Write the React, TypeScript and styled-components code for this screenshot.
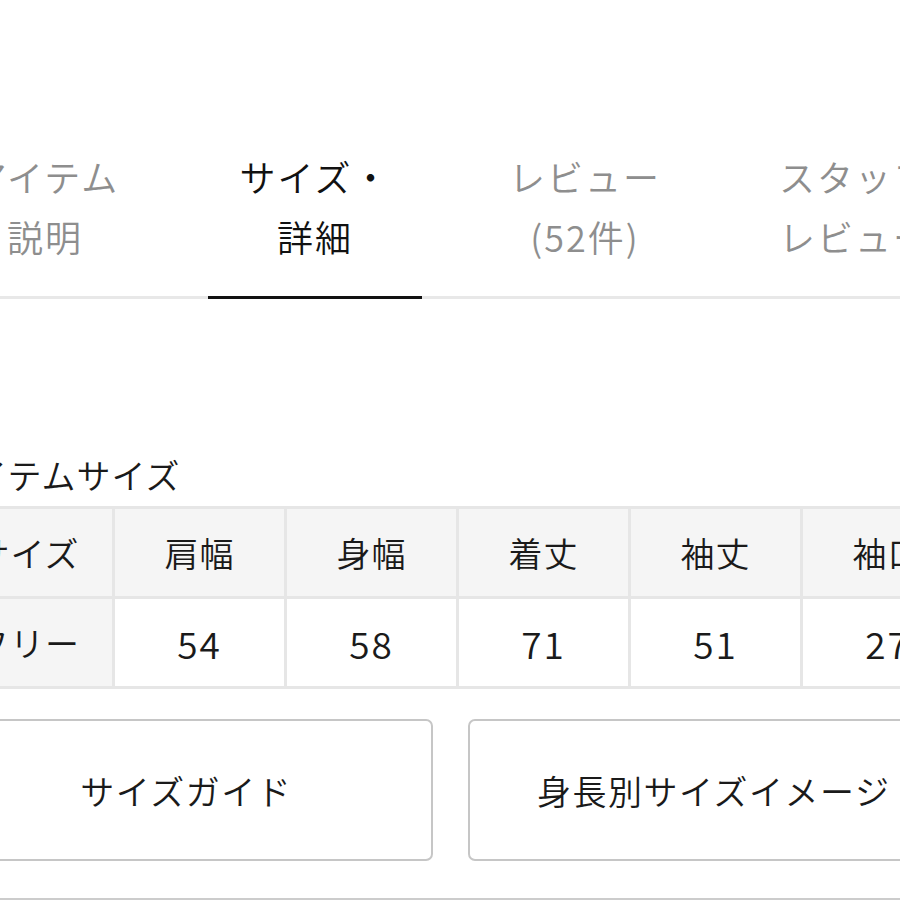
import React from 'react';
import styled, { createGlobalStyle } from 'styled-components';

const GlobalStyle = createGlobalStyle`
  html, body {
    margin: 0;
    padding: 0;
    background: #ffffff;
    overflow: hidden;
  }
  body {
    font-family: "Noto Sans CJK JP", "Noto Sans", sans-serif;
    font-weight: 350;
    color: #1a1a1a;
  }
`;

const Page = styled.div`
  width: 1080px;
  margin-left: -90px;
  padding-top: 146px;
`;

const TabBar = styled.ul`
  display: flex;
  margin: 0;
  padding: 0;
  list-style: none;
  border-bottom: 3px solid #e8e8e8;
`;

const Tab = styled.li<{ active?: boolean }>`
  flex: 1;
  display: flex;
  justify-content: center;
  padding-bottom: 30px;
  position: relative;
  text-align: center;
  font-size: 36px;
  line-height: 60px;
  letter-spacing: 2px;
  color: ${props => (props.active ? '#111111' : '#8e8e8e')};

  &::after {
    content: '';
    display: ${props => (props.active ? 'block' : 'none')};
    position: absolute;
    left: 28px;
    right: 28px;
    bottom: -3px;
    height: 3px;
    background: #111111;
  }
`;

const TabLabel = styled.span`
  display: block;
`;

const Content = styled.div`
  padding: 0 30px;
`;

const SectionTitle = styled.h2`
  margin: 156px 0 11px;
  font-size: 34px;
  line-height: 40px;
  font-weight: 350;
  letter-spacing: 1px;
  color: #1a1a1a;
`;

const TableWrap = styled.div`
  overflow: hidden;
`;

const SizeTable = styled.table`
  border-collapse: collapse;
  table-layout: fixed;
  width: 1032px;
`;

const Cell = styled.td<{ head?: boolean; numeric?: boolean }>`
  width: 169px;
  height: 87px;
  padding: 0;
  border: 3px solid #e6e6e6;
  background: ${props => (props.head ? '#f5f5f5' : '#ffffff')};
  text-align: center;
  vertical-align: middle;
  font-size: ${props => (props.numeric ? '37px' : '34px')};
  font-weight: 350;
  letter-spacing: ${props => (props.numeric ? '2px' : '1px')};
  color: #1a1a1a;
  white-space: nowrap;
  overflow: hidden;
`;

const ButtonRow = styled.div`
  display: grid;
  grid-template-columns: 1fr 1fr;
  gap: 35px;
  margin-top: 30px;
`;

const Button = styled.button`
  height: 142px;
  border: 2px solid #c6c6c6;
  border-radius: 7px;
  background: #ffffff;
  font-family: inherit;
  font-weight: 350;
  font-size: 34px;
  letter-spacing: 1.5px;
  color: #1a1a1a;
  cursor: pointer;
`;

const Divider = styled.hr`
  margin: 37px 0 0;
  border: none;
  border-top: 2px solid #cccccc;
`;

const tabs = [
  { lines: ['アイテム', '説明'] },
  { lines: ['サイズ・', '詳細'], active: true },
  { lines: ['レビュー', '(52件)'] },
  { lines: ['スタッフ', 'レビュー'] },
];

const headers = ['サイズ', '肩幅', '身幅', '着丈', '袖丈', '袖口'];
const values = ['フリー', '54', '58', '71', '51', '27'];

export default function App() {
  return (
    <>
      <GlobalStyle />
      <Page>
        <TabBar>
          {tabs.map(tab => (
            <Tab key={tab.lines.join('')} active={tab.active}>
              <div>
                {tab.lines.map(line => (
                  <TabLabel key={line}>{line}</TabLabel>
                ))}
              </div>
            </Tab>
          ))}
        </TabBar>
        <Content>
          <SectionTitle>アイテムサイズ</SectionTitle>
          <TableWrap>
            <SizeTable>
              <tbody>
                <tr>
                  {headers.map(h => (
                    <Cell as="th" head key={h}>
                      {h}
                    </Cell>
                  ))}
                </tr>
                <tr>
                  {values.map((v, i) => (
                    <Cell
                      as={i === 0 ? 'th' : 'td'}
                      head={i === 0}
                      numeric={i !== 0}
                      key={i}
                    >
                      {v}
                    </Cell>
                  ))}
                </tr>
              </tbody>
            </SizeTable>
          </TableWrap>
          <ButtonRow>
            <Button>サイズガイド</Button>
            <Button>身長別サイズイメージ</Button>
          </ButtonRow>
          <Divider />
        </Content>
      </Page>
    </>
  );
}
